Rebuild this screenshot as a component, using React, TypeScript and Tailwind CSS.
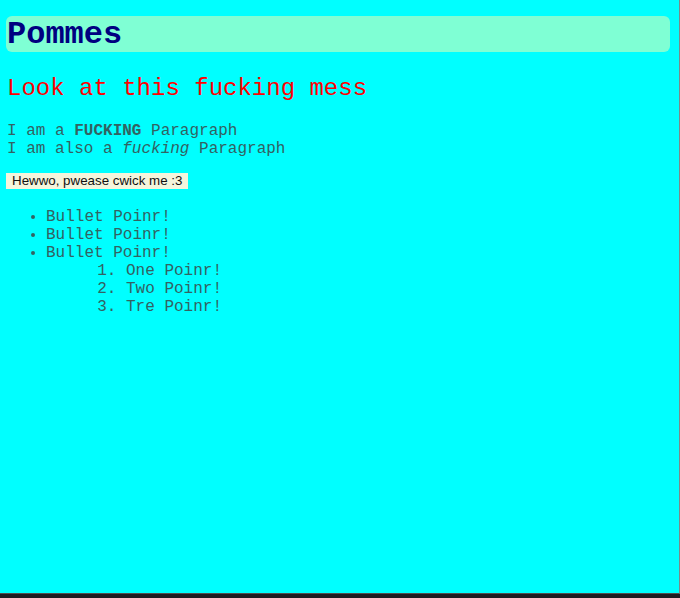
export default function App() {
  return (
    <div className="flex h-[598px] w-[680px] flex-col bg-[#1e1c22] font-['Liberation_Mono',monospace]">
      <div className="h-[594px] shrink-0 border-r border-b border-r-[#7a8a8a] border-b-[#505050] bg-[#00ffff] pt-[16px] pl-[6px] pr-[9px]">
        <h1 className="h-[36px] rounded-md bg-[#7fffd4] pl-[1px] text-[32px] leading-[37px] font-bold text-[#000080]">
          Pommes
        </h1>

        <h2 className="mt-[23px] pl-[1px] text-[24px] leading-[27px] text-[#ff0000]">
          Look at this fucking mess
        </h2>

        <div className="mt-[20px] pl-[1px] text-[16px] leading-[18px] text-[#336262]">
          <p>
            I am a <b>FUCKING</b> Paragraph
          </p>
          <p>
            I am also a <i>fucking</i> Paragraph
          </p>
        </div>

        <button
          type="button"
          className="mt-[15px] flex h-[16px] items-center bg-[#f5f5dc] px-[6px] font-['Liberation_Sans',Arial,sans-serif] text-[13.33px] leading-none text-[#111111]"
        >
          Hewwo, pwease cwick me :3
        </button>

        <ul className="mt-[19px] list-disc pl-[40px] text-[16px] leading-[18px] text-[#336262]">
          <li>Bullet Poinr!</li>
          <li>Bullet Poinr!</li>
          <li>
            Bullet Poinr!
            <ol className="list-decimal pl-[80px]">
              <li>One Poinr!</li>
              <li>Two Poinr!</li>
              <li>Tre Poinr!</li>
            </ol>
          </li>
        </ul>
      </div>
    </div>
  );
}
